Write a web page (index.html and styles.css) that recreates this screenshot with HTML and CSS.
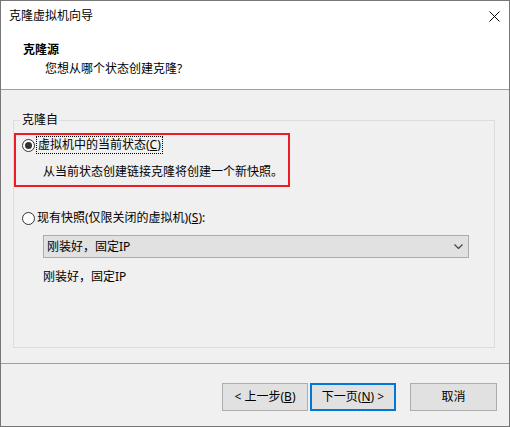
FILE: index.html
```html
<!DOCTYPE html>
<html lang="zh-CN">
<head>
<meta charset="utf-8">
<title>克隆虚拟机向导</title>
<link rel="stylesheet" href="styles.css">
</head>
<body>
<div class="window">
  <div class="titlebar">
    <span class="title">克隆虚拟机向导</span>
    <span class="close">
      <svg width="11" height="11" viewBox="0 0 11 11"><path d="M0.5 0.5 L10.5 10.5 M10.5 0.5 L0.5 10.5" stroke="#000" stroke-width="1" fill="none"/></svg>
    </span>
  </div>
  <div class="header">
    <div class="h-title">克隆源</div>
    <div class="h-sub">您想从哪个状态创建克隆?</div>
  </div>
  <div class="body">
    <fieldset class="group">
      <legend class="legend">克隆自</legend>
      <div class="highlight">
        <div class="option">
          <span class="radio checked"></span>
          <span class="focus">虚拟机中的当前状态(<u>C</u>)</span>
        </div>
        <div class="desc">从当前状态创建链接克隆将创建一个新快照。</div>
      </div>
      <div class="option option2">
        <span class="radio"></span>
        <span class="label">现有快照(仅限关闭的虚拟机)(<u>S</u>):</span>
      </div>
      <div class="select">
        <span>刚装好，固定IP</span>
        <svg width="9" height="5" viewBox="0 0 9 5"><path d="M0.5 0.5 L4.5 4.5 L8.5 0.5" stroke="#444" stroke-width="1.2" fill="none"/></svg>
      </div>
      <div class="snapdesc">刚装好，固定IP</div>
    </fieldset>
  </div>
  <div class="footer">
    <button class="btn">&lt; 上一步(<u>B</u>)</button>
    <button class="btn primary">下一页(<u>N</u>) &gt;</button>
    <button class="btn cancel">取消</button>
  </div>
</div>
</body>
</html>
```

FILE: styles.css
```css
* { box-sizing: border-box; }
html, body { margin: 0; padding: 0; }
body {
  font-family: "Noto Sans", "Noto Sans CJK SC", sans-serif;
  font-size: 12px;
  line-height: 16px;
  color: #000;
  background: #f0f0f0;
}
.window {
  width: 510px;
  height: 427px;
  border: 1px solid #777;
  background: #f0f0f0;
  display: flex;
  flex-direction: column;
}
.titlebar {
  height: 30px;
  background: #fff;
  display: flex;
  align-items: center;
  justify-content: space-between;
  padding: 0 9px 0 8px;
}
.close { display: flex; align-items: center; }
.header {
  background: #fff;
  padding: 11px 0 12px 22px;
  border-bottom: 1px solid #a0a0a0;
}
.h-title { font-weight: bold; }
.h-sub { margin-top: 3px; padding-left: 22px; }
.body {
  flex: 1;
  padding: 22px 14px 0 12px;
}
.group {
  margin: 0;
  padding: 0 0 10px 0;
  border: 1px solid #dcdcdc;
  height: 236px;
}
.legend {
  padding: 0 2px;
  margin-left: 6px;
  line-height: 16px;
}
.highlight {
  margin-top: 5px;
  width: 276px;
  border: 2px solid #ed1c24;
  padding: 2px 0 5px 0;
}
.option {
  display: flex;
  align-items: center;
  height: 16px;
  padding-left: 6px;
}
.option2 { margin-top: 23px; padding-left: 8px; }
.radio {
  width: 13px;
  height: 13px;
  border: 1px solid #333;
  border-radius: 50%;
  background: #fff;
  display: flex;
  align-items: center;
  justify-content: center;
  margin-right: 2px;
}
.radio.checked::after {
  content: "";
  width: 7px;
  height: 7px;
  border-radius: 50%;
  background: #333;
}
.focus {
  outline: 1px dotted #000;
  padding: 0 1px;
}
.desc { margin-top: 11px; padding-left: 27px; }
.select {
  margin: 9px 0 0 29px;
  width: 426px;
  height: 23px;
  background: #e1e1e1;
  border: 1px solid #adadad;
  display: flex;
  align-items: center;
  justify-content: space-between;
  padding: 0 5px 0 3px;
}
.snapdesc { margin-top: 11px; padding-left: 29px; }
.footer {
  height: 63px;
  border-top: 1px solid #a0a0a0;
  display: flex;
  justify-content: flex-end;
  padding: 19px 12px 0 0;
}
.btn {
  font: inherit;
  width: 86px;
  height: 28px;
  background: #e1e1e1;
  border: 1px solid #adadad;
  color: #000;
  padding: 0;
}
.primary { border: 2px solid #0078d7; margin-left: 2px; }
.cancel { margin-left: 14px; width: 87px; }
```
